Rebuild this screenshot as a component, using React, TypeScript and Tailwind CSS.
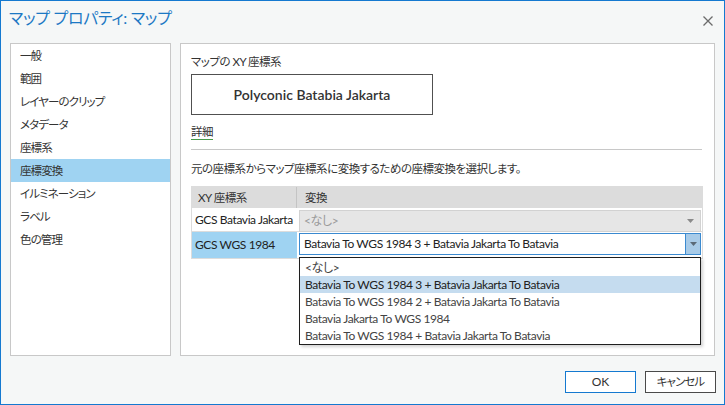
import React from "react";

const font = "font-['Lato','Noto_Sans_CJK_JP',sans-serif] [font-feature-settings:'palt']";
const jp = "text-[11.5px] tracking-[-0.5px]";
const jpNav = "text-[11.5px] tracking-[-0.9px]";
const latin = "tracking-[-0.4px]";

const navItems = [
  "一般",
  "範囲",
  "レイヤーのクリップ",
  "メタデータ",
  "座標系",
  "座標変換",
  "イルミネーション",
  "ラベル",
  "色の管理",
];

const options = [
  "<なし>",
  "Batavia To WGS 1984 3 + Batavia Jakarta To Batavia",
  "Batavia To WGS 1984 2 + Batavia Jakarta To Batavia",
  "Batavia Jakarta To WGS 1984",
  "Batavia To WGS 1984 + Batavia Jakarta To Batavia",
];

const Caret = ({ color }: { color: string }) => (
  <svg width="7" height="4" viewBox="0 0 7 4">
    <path d="M0 0 H7 L3.5 4 Z" fill={color} />
  </svg>
);

export default function App() {
  const active = "座標変換";
  const picked = options[1];

  return (
    <div className={`${font} w-[725px] h-[405px] bg-[#f5f7f7] border border-[#1479d0] flex flex-col text-[12px] text-[#333]`}>
      {/* Title bar */}
      <div className="h-[42px] shrink-0 flex items-start justify-between pl-[8px] pr-[11px] pt-[4px]">
        <span className="text-[16px] text-[#1c78c4] leading-[26px] tracking-[-0.3px]">マップ プロパティ: マップ</span>
        <svg width="10" height="10" viewBox="0 0 10 10" className="mt-[11px]">
          <path d="M0.5 0.5 L9.5 9.5 M9.5 0.5 L0.5 9.5" stroke="#6b6b6b" strokeWidth="1.3" />
        </svg>
      </div>

      {/* Body */}
      <div className="flex gap-[9px] pl-[9px] h-[313px] shrink-0">
        {/* Left nav */}
        <div className="w-[161px] bg-white border border-[#c8c8c8]">
          {navItems.map((item) => (
            <div
              key={item}
              className={`${jpNav} h-[23px] leading-[23px] pl-[9px] ${item === active ? "bg-[#9fd3f2]" : ""}`}
            >
              {item}
            </div>
          ))}
        </div>

        {/* Right panel */}
        <div className="w-[535px] bg-white border border-[#c8c8c8] pl-[10px] pr-[10px] flex flex-col">
          <div className={`${jp} mt-[10px] leading-[16px]`}>マップの XY 座標系</div>
          <div className="mt-[4px] w-[242px] h-[41px] border border-[#505050] flex items-center justify-center text-[14px] font-semibold text-[#333]">
            Polyconic Batabia Jakarta
          </div>
          <div className={`${jp} mt-[9px] leading-[16px]`}>
            <span className="underline decoration-[#4a9a4a] underline-offset-[3px]">詳細</span>
          </div>
          <div className="mt-[9px] h-px bg-[#c8c8c8] w-[511px]" />
          <div className={`${jp} mt-[11px] leading-[16px]`}>元の座標系からマップ座標系に変換するための座標変換を選択します。</div>

          {/* Table */}
          <div className="relative mt-[9px] w-[512px] border border-[#dcdcdc]">
            <div className={`${jp} flex h-[21px] bg-[#dcdcdc] leading-[21px]`}>
              <div className="w-[105px] pl-[6px] border-r border-[#c4c4c4]">XY 座標系</div>
              <div className="pl-[8px]">変換</div>
            </div>
            <div className={`${latin} flex h-[24px] border-b border-[#dcdcdc]`}>
              <div className="w-[105px] pl-[3px] leading-[24px] text-[#222] whitespace-nowrap">GCS Batavia Jakarta</div>
              <div className="flex-1 pl-[2px] pr-[1px] pt-[2px]">
                <div className="h-[22px] bg-[#e6e6e6] border border-[#d2d2d2] flex items-center justify-between pl-[4px] pr-[6px] text-[#9a9a9a]">
                  <span>{options[0]}</span>
                  <Caret color="#8a8a8a" />
                </div>
              </div>
            </div>
            <div className={`${latin} flex h-[26px]`}>
              <div className="w-[105px] pl-[3px] leading-[25px] bg-[#9fd3f2] text-[#222]">GCS WGS 1984</div>
              <div className="flex-1 pl-[2px] pr-[1px] pt-[1px]">
                <div className="h-[22px] bg-white border border-[#3b8ad0] flex items-stretch text-[#222]">
                  <span className="flex-1 pl-[4px] leading-[20px] whitespace-nowrap">{picked}</span>
                  <span className="w-[15px] bg-[#a8cbe8] border-l border-[#3b8ad0] flex items-center justify-center">
                    <Caret color="#5a6a78" />
                  </span>
                </div>
              </div>
            </div>

            {/* Open dropdown list */}
            <div className={`${latin} absolute left-[107px] top-[70px] w-[402px] bg-white border border-[#1e1e1e] shadow-[2px_2px_3px_rgba(0,0,0,0.18)] pt-[1px]`}>
              {options.map((o) => (
                <div
                  key={o}
                  className={`h-[17px] leading-[17px] pl-[5px] whitespace-nowrap ${o === picked ? "bg-[#c5dcef] text-[#222]" : "text-[#444]"}`}
                >
                  {o}
                </div>
              ))}
            </div>
          </div>
        </div>
      </div>

      {/* Footer buttons */}
      <div className="flex justify-end gap-[9px] pr-[8px] pt-[15px]">
        <button className="w-[71px] h-[22px] border border-[#1479d0] bg-white text-[#333] leading-[20px]">OK</button>
        <button className={`${jpNav} w-[71px] h-[22px] border border-[#4a4a4a] bg-white text-[#333] leading-[20px]`}>キャンセル</button>
      </div>
    </div>
  );
}
